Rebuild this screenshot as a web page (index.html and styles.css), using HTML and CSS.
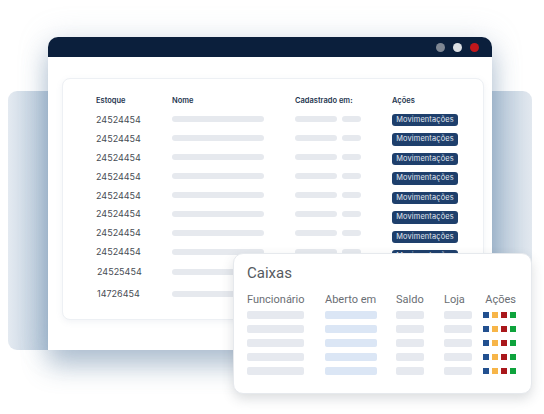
FILE: index.html
```html
<!DOCTYPE html>
<html lang="pt">
<head>
<meta charset="utf-8">
<title>Estoque e Caixas</title>
<link rel="stylesheet" href="styles.css">
</head>
<body>
<div class="stage">
  <div class="backdrop"></div>

  <div class="window">
    <div class="titlebar">
      <span class="dot dot-gray"></span>
      <span class="dot dot-light"></span>
      <span class="dot dot-red"></span>
    </div>
    <div class="card">
      <div class="table">
        <div class="col col-stock">
          <div class="head">Estoque</div>
          <div class="cell">24524454</div>
          <div class="cell">24524454</div>
          <div class="cell">24524454</div>
          <div class="cell">24524454</div>
          <div class="cell">24524454</div>
          <div class="cell">24524454</div>
          <div class="cell">24524454</div>
          <div class="cell">24524454</div>
          <div class="cell cell-9 shift">24525454</div>
          <div class="cell cell-10 shift">14726454</div>
        </div>
        <div class="col col-name">
          <div class="head">Nome</div>
          <div class="cell"><span class="bar bar-name"></span></div>
          <div class="cell"><span class="bar bar-name"></span></div>
          <div class="cell"><span class="bar bar-name"></span></div>
          <div class="cell"><span class="bar bar-name"></span></div>
          <div class="cell"><span class="bar bar-name"></span></div>
          <div class="cell"><span class="bar bar-name"></span></div>
          <div class="cell"><span class="bar bar-name"></span></div>
          <div class="cell"><span class="bar bar-name"></span></div>
          <div class="cell cell-9"><span class="bar bar-name"></span></div>
          <div class="cell cell-10"><span class="bar bar-name"></span></div>
        </div>
        <div class="col col-date">
          <div class="head">Cadastrado em:</div>
          <div class="cell"><span class="bar bar-date"></span><span class="bar bar-time"></span></div>
          <div class="cell"><span class="bar bar-date"></span><span class="bar bar-time"></span></div>
          <div class="cell"><span class="bar bar-date"></span><span class="bar bar-time"></span></div>
          <div class="cell"><span class="bar bar-date"></span><span class="bar bar-time"></span></div>
          <div class="cell"><span class="bar bar-date"></span><span class="bar bar-time"></span></div>
          <div class="cell"><span class="bar bar-date"></span><span class="bar bar-time"></span></div>
          <div class="cell"><span class="bar bar-date"></span><span class="bar bar-time"></span></div>
          <div class="cell"><span class="bar bar-date"></span><span class="bar bar-time"></span></div>
        </div>
        <div class="col col-actions">
          <div class="head">Ações</div>
          <div class="cell btn-cell"><span class="btn">Movimentações</span></div>
          <div class="cell btn-cell"><span class="btn">Movimentações</span></div>
          <div class="cell btn-cell"><span class="btn">Movimentações</span></div>
          <div class="cell btn-cell"><span class="btn">Movimentações</span></div>
          <div class="cell btn-cell"><span class="btn">Movimentações</span></div>
          <div class="cell btn-cell"><span class="btn">Movimentações</span></div>
          <div class="cell btn-cell"><span class="btn">Movimentações</span></div>
          <div class="cell btn-cell"><span class="btn">Movimentações</span></div>
        </div>
      </div>
    </div>
  </div>

  <div class="caixas">
    <div class="caixas-title">Caixas</div>
    <div class="caixas-head">
      <div class="ch">Funcionário</div>
      <div class="ch">Aberto em</div>
      <div class="ch">Saldo</div>
      <div class="ch">Loja</div>
      <div class="ch ch-actions">Ações</div>
    </div>
    <div class="caixas-grid">
      <span class="cb cb-emp"></span><span class="cb cb-open"></span><span class="cb cb-short"></span><span class="cb cb-short"></span>
      <span class="sq-group"><i class="sq sq-blue"></i><i class="sq sq-orange"></i><i class="sq sq-red"></i><i class="sq sq-green"></i></span>

      <span class="cb cb-emp"></span><span class="cb cb-open"></span><span class="cb cb-short"></span><span class="cb cb-short"></span>
      <span class="sq-group"><i class="sq sq-blue"></i><i class="sq sq-orange"></i><i class="sq sq-red"></i><i class="sq sq-green"></i></span>

      <span class="cb cb-emp"></span><span class="cb cb-open"></span><span class="cb cb-short"></span><span class="cb cb-short"></span>
      <span class="sq-group"><i class="sq sq-blue"></i><i class="sq sq-orange"></i><i class="sq sq-red"></i><i class="sq sq-green"></i></span>

      <span class="cb cb-emp"></span><span class="cb cb-open"></span><span class="cb cb-short"></span><span class="cb cb-short"></span>
      <span class="sq-group"><i class="sq sq-blue"></i><i class="sq sq-orange"></i><i class="sq sq-red"></i><i class="sq sq-green"></i></span>

      <span class="cb cb-emp"></span><span class="cb cb-open"></span><span class="cb cb-short"></span><span class="cb cb-short"></span>
      <span class="sq-group"><i class="sq sq-blue"></i><i class="sq sq-orange"></i><i class="sq sq-red"></i><i class="sq sq-green"></i></span>
    </div>
  </div>
</div>
</body>
</html>
```

FILE: styles.css
```css
* { box-sizing: border-box; }

html, body {
  margin: 0;
  padding: 0;
  background: #ffffff;
}

body {
  width: 544px;
  height: 414px;
  overflow: hidden;
  font-family: "Inter", "Liberation Sans", sans-serif;
}

.stage {
  position: relative;
  width: 544px;
  height: 414px;
  padding-top: 37px;
}

.backdrop {
  position: absolute;
  left: 8px;
  top: 91px;
  width: 524px;
  height: 259px;
  border-radius: 9px;
  background: linear-gradient(90deg, #e4eaf1 0%, #b7c9da 8%, #b3c6d8 50%, #b7c9da 92%, #e2e8ef 100%);
}

.window {
  position: relative;
  margin-left: 48px;
  width: 444px;
  height: 313px;
  background: #ffffff;
  border-radius: 10px 10px 0 0;
  box-shadow: 0 16px 26px rgba(96, 128, 162, 0.45), 0 0 30px rgba(150, 170, 195, 0.25);
}

.titlebar {
  height: 20px;
  background: #0b1f3c;
  border-radius: 10px 10px 0 0;
  display: flex;
  justify-content: flex-end;
  align-items: center;
  gap: 8px;
  padding-right: 13px;
}

.dot {
  width: 9px;
  height: 9px;
  border-radius: 50%;
}
.dot-gray { background: #7e8693; }
.dot-light { background: #dcdfe4; }
.dot-red { background: #c1171b; }

.card {
  margin: 21px 8px 0 14px;
  height: 242px;
  border: 1px solid #edf0f4;
  border-radius: 8px;
  background: #ffffff;
  box-shadow: 0 2px 6px rgba(120, 140, 165, 0.10);
  padding: 11px 0 0 33px;
}

.table {
  display: flex;
}

.col {
  display: flex;
  flex-direction: column;
}
.col-stock { width: 76px; }
.col-name { width: 123px; }
.col-date { width: 97px; }
.col-actions { width: 80px; }

.head {
  height: 20px;
  display: flex;
  align-items: center;
  font-size: 7.5px;
  font-weight: 600;
  color: #25364f;
}

.cell {
  height: 18.9px;
  display: flex;
  align-items: center;
  gap: 5px;
  font-size: 9px;
  color: #474c54;
}
.cell-9 { height: 21px; }
.cell-10 { height: 23px; }
.shift { padding-left: 1px; }

.bar {
  display: block;
  height: 6px;
  border-radius: 3px;
  background: #e6e9ee;
}
.bar-name { width: 92px; }
.bar-date { width: 42px; }
.bar-time { width: 19px; }

.btn-cell { height: 19.5px; }

.btn {
  display: inline-block;
  width: 66px;
  height: 12.5px;
  line-height: 12.5px;
  border-radius: 3px;
  background: #1e3f6c;
  color: #e3e9f1;
  font-size: 7.4px;
  letter-spacing: 0.15px;
  text-align: center;
  white-space: nowrap;
}

.caixas {
  position: absolute;
  left: 233px;
  top: 253px;
  width: 299px;
  height: 141px;
  background: #ffffff;
  border: 1px solid #e6e9ed;
  border-radius: 10px;
  box-shadow: 0 5px 12px rgba(60, 70, 85, 0.18);
  padding: 10px 0 0 13px;
  font-family: "Roboto", "Liberation Sans", sans-serif;
  z-index: 2;
}

.caixas-title {
  font-size: 15px;
  line-height: 18px;
  color: #555a60;
}

.caixas-head,
.caixas-grid {
  display: grid;
  grid-template-columns: 78px 71px 48px 38px 34px;
}

.caixas-head {
  margin-top: 11px;
}

.caixas-grid {
  margin-top: 4px;
  grid-auto-rows: 8px;
  row-gap: 6px;
  align-items: center;
}

.ch {
  font-size: 11px;
  line-height: 14px;
  color: #6a6e74;
  white-space: nowrap;
}
.ch-actions { text-align: right; }

.cb {
  display: block;
  height: 8px;
  border-radius: 2px;
  background: #e6e9ef;
}
.cb-emp { width: 57px; }
.cb-open { width: 52px; background: #dbe6f5; }
.cb-short { width: 28px; }

.sq-group {
  display: flex;
  gap: 3px;
  justify-content: flex-end;
}

.sq {
  display: block;
  width: 6px;
  height: 6px;
}
.sq-blue { background: #22508f; }
.sq-orange { background: #f7b548; }
.sq-red { background: #a9171b; }
.sq-green { background: #0ea33c; }
```
